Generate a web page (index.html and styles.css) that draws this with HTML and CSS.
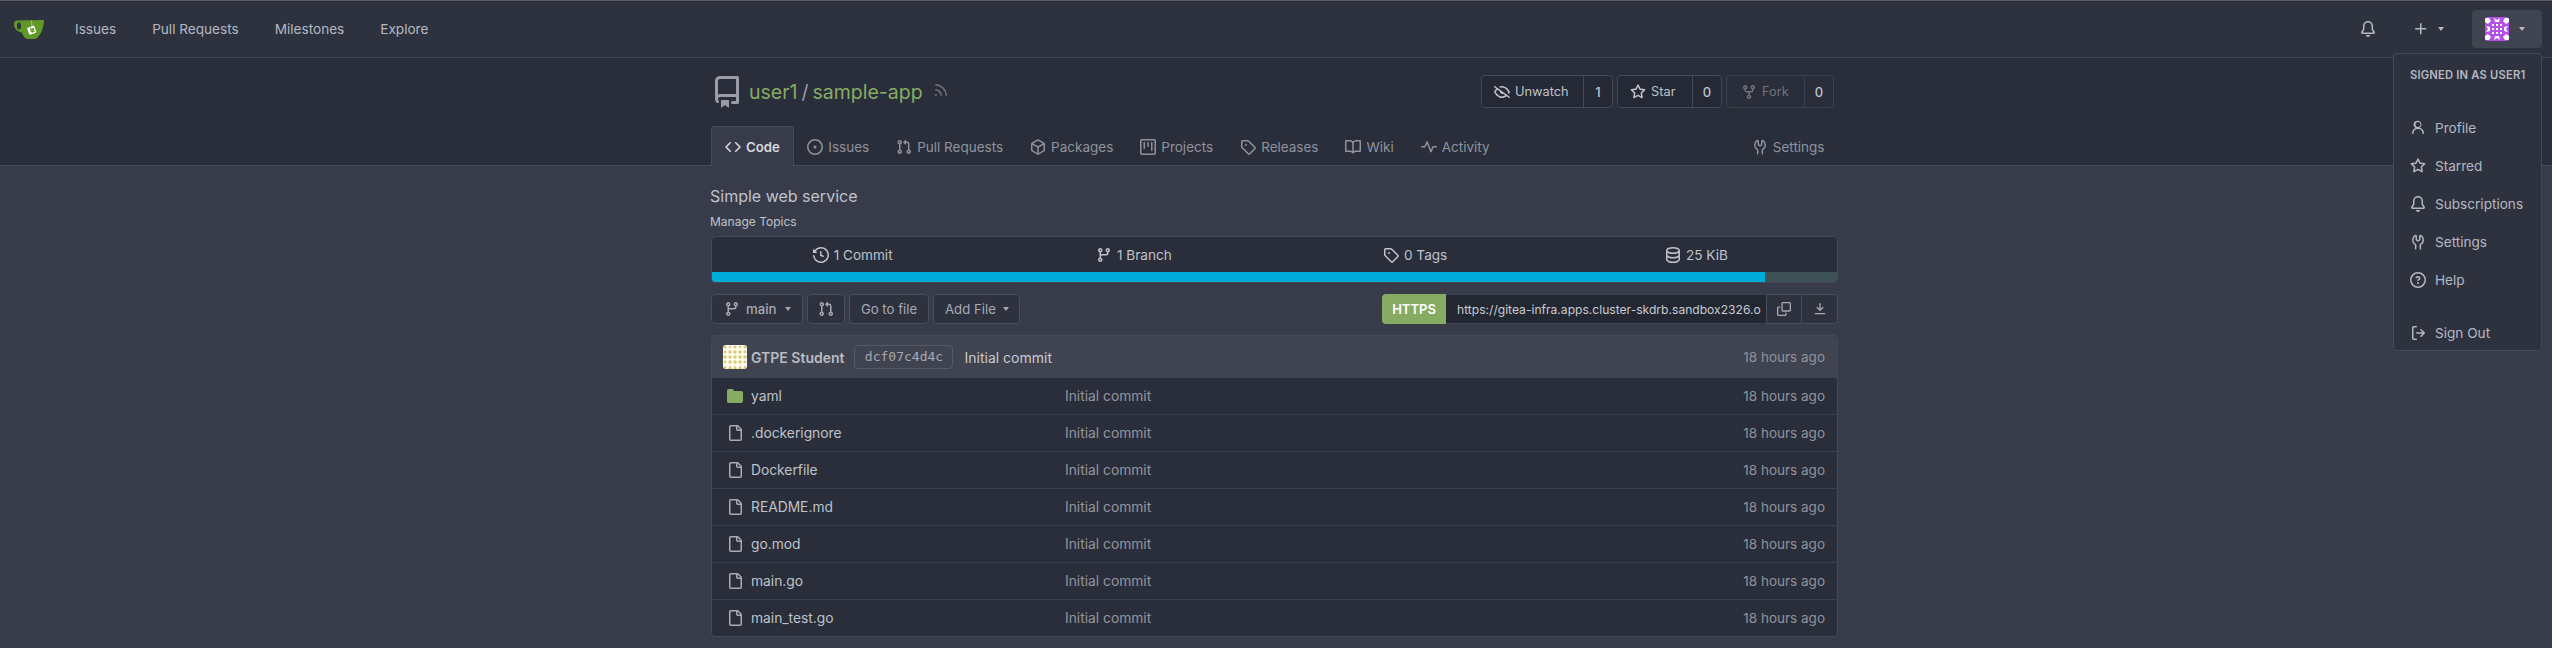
FILE: index.html
```html
<!DOCTYPE html>
<html lang="en">
<head>
  <meta charset="UTF-8" />
  <title>user1/sample-app</title>
  <link rel="stylesheet" href="styles.css">
</head>
<body>
  <svg class="icon-defs" aria-hidden="true">
    <symbol id="i-repo" viewBox="0 0 16 16"><path d="M2 2.5A2.5 2.5 0 0 1 4.5 0h8.75a.75.75 0 0 1 .75.75v12.5a.75.75 0 0 1-.75.75h-2.5a.75.75 0 0 1 0-1.5h1.75v-2h-8a1 1 0 0 0-.714 1.7.75.75 0 1 1-1.072 1.05A2.495 2.495 0 0 1 2 11.5Zm10.5-1h-8a1 1 0 0 0-1 1v6.708A2.486 2.486 0 0 1 4.5 9h8ZM5 12.25a.25.25 0 0 1 .25-.25h3.5a.25.25 0 0 1 .25.25v3.25a.25.25 0 0 1-.4.2l-1.45-1.087a.249.249 0 0 0-.3 0L5.4 15.7a.25.25 0 0 1-.4-.2Z"/></symbol>
    <symbol id="i-rss" viewBox="0 0 16 16"><path d="M2.002 2.725a.75.75 0 0 1 .797-.699C8.79 2.42 13.58 7.21 13.974 13.201a.75.75 0 0 1-1.497.098 10.502 10.502 0 0 0-9.776-9.776.747.747 0 0 1-.7-.798ZM2.84 7.05h-.002a7.002 7.002 0 0 1 6.113 6.111.75.75 0 0 1-1.49.178 5.503 5.503 0 0 0-4.8-4.8.75.75 0 0 1 .179-1.489ZM2 13a1 1 0 1 1 2 0 1 1 0 0 1-2 0Z"/></symbol>
    <symbol id="i-code" viewBox="0 0 16 16"><path d="m11.28 3.22 4.25 4.25a.75.75 0 0 1 0 1.06l-4.25 4.25a.749.749 0 0 1-1.275-.326.749.749 0 0 1 .215-.734L13.94 8l-3.72-3.72a.749.749 0 0 1 .326-1.275.749.749 0 0 1 .734.215Zm-6.56 0a.751.751 0 0 1 1.042.018.751.751 0 0 1 .018 1.042L2.06 8l3.72 3.72a.749.749 0 0 1-.326 1.275.749.749 0 0 1-.734-.215L.47 8.53a.75.75 0 0 1 0-1.06Z"/></symbol>
    <symbol id="i-issue" viewBox="0 0 16 16"><path d="M8 9.5a1.5 1.5 0 1 0 0-3 1.5 1.5 0 0 0 0 3Z"/><path d="M8 0a8 8 0 1 1 0 16A8 8 0 0 1 8 0ZM1.5 8a6.5 6.5 0 1 0 13 0 6.5 6.5 0 0 0-13 0Z"/></symbol>
    <symbol id="i-pull" viewBox="0 0 16 16"><path d="M1.5 3.25a2.25 2.25 0 1 1 3 2.122v5.256a2.251 2.251 0 1 1-1.5 0V5.372A2.25 2.25 0 0 1 1.5 3.25Zm5.677-.177L9.573.677A.25.25 0 0 1 10 .854V2.5h1A2.5 2.5 0 0 1 13.5 5v5.628a2.251 2.251 0 1 1-1.5 0V5a1 1 0 0 0-1-1h-1v1.646a.25.25 0 0 1-.427.177L7.177 3.427a.25.25 0 0 1 0-.354ZM3.75 2.5a.75.75 0 1 0 0 1.5.75.75 0 0 0 0-1.5Zm0 9.5a.75.75 0 1 0 0 1.5.75.75 0 0 0 0-1.5Zm8.25.75a.75.75 0 1 0 1.5 0 .75.75 0 0 0-1.5 0Z"/></symbol>
    <symbol id="i-package" viewBox="0 0 16 16"><path d="m8.878.392 5.25 3.045c.54.314.872.89.872 1.514v6.098a1.75 1.75 0 0 1-.872 1.514l-5.25 3.045a1.75 1.75 0 0 1-1.756 0l-5.25-3.045A1.75 1.75 0 0 1 1 11.049V4.951c0-.624.332-1.201.872-1.514L7.122.392a1.75 1.75 0 0 1 1.756 0ZM7.875 1.69l-4.63 2.685L8 7.133l4.755-2.758-4.63-2.685a.248.248 0 0 0-.25 0ZM2.5 5.677v5.372c0 .09.047.171.125.216l4.625 2.683V8.432Zm6.25 8.271 4.625-2.683a.25.25 0 0 0 .125-.216V5.677L8.75 8.432Z"/></symbol>
    <symbol id="i-project" viewBox="0 0 16 16"><path d="M1.75 0h12.5C15.216 0 16 .784 16 1.75v12.5A1.75 1.75 0 0 1 14.25 16H1.75A1.75 1.75 0 0 1 0 14.25V1.75C0 .784.784 0 1.75 0ZM1.5 1.75v12.5c0 .138.112.25.25.25h12.5a.25.25 0 0 0 .25-.25V1.75a.25.25 0 0 0-.25-.25H1.75a.25.25 0 0 0-.25.25ZM11.75 3a.75.75 0 0 1 .75.75v7.5a.75.75 0 0 1-1.5 0v-7.5a.75.75 0 0 1 .75-.75Zm-8.25.75a.75.75 0 0 1 1.5 0v5.5a.75.75 0 0 1-1.5 0ZM8 3a.75.75 0 0 1 .75.75v3.5a.75.75 0 0 1-1.5 0v-3.5A.75.75 0 0 1 8 3Z"/></symbol>
    <symbol id="i-tag" viewBox="0 0 16 16"><path d="M1 7.775V2.75C1 1.784 1.784 1 2.75 1h5.025c.464 0 .91.184 1.238.513l6.25 6.25a1.75 1.75 0 0 1 0 2.474l-5.026 5.026a1.75 1.75 0 0 1-2.474 0l-6.25-6.25A1.752 1.752 0 0 1 1 7.775Zm1.5 0c0 .066.026.13.073.177l6.25 6.25a.25.25 0 0 0 .354 0l5.025-5.025a.25.25 0 0 0 0-.354l-6.25-6.25a.25.25 0 0 0-.177-.073H2.75a.25.25 0 0 0-.25.25ZM6 5a1 1 0 1 1 0 2 1 1 0 0 1 0-2Z"/></symbol>
    <symbol id="i-book" viewBox="0 0 16 16"><path d="M0 1.75A.75.75 0 0 1 .75 1h4.253c1.227 0 2.317.59 3 1.501A3.743 3.743 0 0 1 11.006 1h4.245a.75.75 0 0 1 .75.75v10.5a.75.75 0 0 1-.75.75h-4.507a2.25 2.25 0 0 0-1.591.659l-.622.621a.75.75 0 0 1-1.06 0l-.622-.621A2.25 2.25 0 0 0 5.258 13H.75a.75.75 0 0 1-.75-.75Zm7.251 10.324.004-5.073-.002-2.253A2.25 2.25 0 0 0 5.003 2.5H1.5v9h3.757a3.75 3.75 0 0 1 1.994.574ZM8.755 4.75l-.004 7.322a3.752 3.752 0 0 1 1.992-.572H14.5v-9h-3.495a2.25 2.25 0 0 0-2.25 2.25Z"/></symbol>
    <symbol id="i-pulse" viewBox="0 0 16 16"><path d="M6 2c.306 0 .582.187.696.471L10 10.731l1.304-3.26A.751.751 0 0 1 12 7h3.25a.75.75 0 0 1 0 1.5h-2.742l-1.812 4.528a.751.751 0 0 1-1.392 0L6 4.77 4.696 8.03A.75.75 0 0 1 4 8.5H.75a.75.75 0 0 1 0-1.5h2.742l1.812-4.529A.751.751 0 0 1 6 2Z"/></symbol>
    <symbol id="i-tools" viewBox="0 0 16 16"><path d="M5.433 2.304A4.492 4.492 0 0 0 3.5 6c0 1.598.832 3.002 2.09 3.802.518.328.929.923.902 1.64v.008l-.164 3.337a.75.75 0 1 1-1.498-.073l.163-3.33c.002-.085-.05-.216-.207-.316A5.996 5.996 0 0 1 2 6a5.993 5.993 0 0 1 2.567-4.92 1.482 1.482 0 0 1 1.673-.04c.462.296.76.827.76 1.423v2.82c0 .082.041.16.11.206l.75.51a.25.25 0 0 0 .28 0l.75-.51A.249.249 0 0 0 9 5.282V2.463c0-.596.298-1.127.76-1.423a1.482 1.482 0 0 1 1.673.04A5.993 5.993 0 0 1 14 6a5.996 5.996 0 0 1-2.786 5.068c-.157.1-.209.23-.207.315l.163 3.33a.752.752 0 0 1-1.094.714.75.75 0 0 1-.404-.64l-.164-3.345c-.027-.717.384-1.312.902-1.64A4.495 4.495 0 0 0 12.5 6a4.492 4.492 0 0 0-1.933-3.696c-.024-.017-.067-.067-.067.159v2.82a1.75 1.75 0 0 1-.768 1.448l-.75.51a1.75 1.75 0 0 1-1.964 0l-.75-.51A1.75 1.75 0 0 1 5.5 5.283v-2.82c0-.226-.043-.176-.067-.159Z"/></symbol>
    <symbol id="i-eye-closed" viewBox="0 0 16 16"><path d="M.143 2.31a.75.75 0 0 1 1.047-.167l14.5 10.5a.75.75 0 1 1-.88 1.214l-2.248-1.628C11.346 13.19 9.792 14 8 14c-1.981 0-3.67-.992-4.933-2.078C1.797 10.832.88 9.577.43 8.9a1.619 1.619 0 0 1 0-1.797c.353-.533.995-1.42 1.868-2.305L.31 3.357A.75.75 0 0 1 .143 2.31Zm1.536 5.622A.12.12 0 0 0 1.657 8c0 .021.006.045.022.068.412.621 1.242 1.75 2.366 2.717C5.175 11.758 6.527 12.5 8 12.5c1.195 0 2.31-.488 3.29-1.191L9.063 9.695A2 2 0 0 1 6.058 7.52L3.529 5.688a14.207 14.207 0 0 0-1.85 2.244ZM8 3.5c-.516 0-1.017.09-1.499.251a.75.75 0 1 1-.473-1.423A6.207 6.207 0 0 1 8 2c1.981 0 3.67.992 4.933 2.078 1.27 1.091 2.187 2.345 2.637 3.023a1.62 1.62 0 0 1 0 1.798c-.11.166-.248.365-.41.587a.75.75 0 1 1-1.21-.887c.148-.201.272-.382.371-.53a.119.119 0 0 0 0-.137c-.412-.621-1.242-1.75-2.366-2.717C10.825 4.242 9.473 3.5 8 3.5Z"/></symbol>
    <symbol id="i-star" viewBox="0 0 16 16"><path d="M8 .25a.75.75 0 0 1 .673.418l1.882 3.815 4.21.612a.75.75 0 0 1 .416 1.279l-3.046 2.97.719 4.192a.751.751 0 0 1-1.088.791L8 12.347l-3.766 1.98a.75.75 0 0 1-1.088-.79l.72-4.194L.818 6.374a.75.75 0 0 1 .416-1.28l4.21-.611L7.327.668A.75.75 0 0 1 8 .25Zm0 2.445L6.615 5.5a.75.75 0 0 1-.564.41l-3.097.45 2.24 2.184a.75.75 0 0 1 .216.664l-.528 3.084 2.769-1.456a.75.75 0 0 1 .698 0l2.77 1.456-.53-3.084a.75.75 0 0 1 .216-.664l2.24-2.183-3.096-.45a.75.75 0 0 1-.564-.41L8 2.694Z"/></symbol>
    <symbol id="i-fork" viewBox="0 0 16 16"><path d="M5 5.372v.878c0 .414.336.75.75.75h4.5a.75.75 0 0 0 .75-.75v-.878a2.25 2.25 0 1 1 1.5 0v.878a2.25 2.25 0 0 1-2.25 2.25h-1.5v2.128a2.251 2.251 0 1 1-1.5 0V8.5h-1.5A2.25 2.25 0 0 1 3.5 6.25v-.878a2.25 2.25 0 1 1 1.5 0ZM5 3.25a.75.75 0 1 0-1.5 0 .75.75 0 0 0 1.5 0Zm6.75.75a.75.75 0 1 0 0-1.5.75.75 0 0 0 0 1.5Zm-3 8.75a.75.75 0 1 0-1.5 0 .75.75 0 0 0 1.5 0Z"/></symbol>
    <symbol id="i-history" viewBox="0 0 16 16"><path d="m.427 1.927 1.215 1.215a8.002 8.002 0 1 1-1.6 5.685.75.75 0 1 1 1.493-.154 6.5 6.5 0 1 0 1.18-4.458l1.358 1.358A.25.25 0 0 1 3.896 6H.25A.25.25 0 0 1 0 5.75V2.104a.25.25 0 0 1 .427-.177ZM7.75 4a.75.75 0 0 1 .75.75v2.992l2.028.812a.75.75 0 0 1-.557 1.392l-2.5-1A.751.751 0 0 1 7 8.25v-3.5A.75.75 0 0 1 7.75 4Z"/></symbol>
    <symbol id="i-branch" viewBox="0 0 16 16"><path d="M9.5 3.25a2.25 2.25 0 1 1 3 2.122V6A2.5 2.5 0 0 1 10 8.5H6a1 1 0 0 0-1 1v1.128a2.251 2.251 0 1 1-1.5 0V5.372a2.25 2.25 0 1 1 1.5 0v1.836A2.493 2.493 0 0 1 6 7h4a1 1 0 0 0 1-1v-.628A2.25 2.25 0 0 1 9.5 3.25Zm-6 0a.75.75 0 1 0 1.5 0 .75.75 0 0 0-1.5 0Zm8.25-.75a.75.75 0 1 0 0 1.5.75.75 0 0 0 0-1.5ZM4.25 12a.75.75 0 1 0 0 1.5.75.75 0 0 0 0-1.5Z"/></symbol>
    <symbol id="i-database" viewBox="0 0 16 16"><path d="M1 3.5c0-.626.292-1.165.7-1.59.406-.422.956-.767 1.579-1.041C4.525.32 6.195 0 8 0c1.805 0 3.475.32 4.722.869.622.274 1.172.62 1.578 1.04.408.426.7.965.7 1.591v9c0 .626-.292 1.165-.7 1.59-.406.422-.956.767-1.579 1.041C11.476 15.68 9.806 16 8 16c-1.805 0-3.475-.32-4.721-.869-.623-.274-1.173-.62-1.579-1.04-.408-.426-.7-.965-.7-1.591Zm1.5 0c0 .133.058.318.282.551.227.237.591.483 1.101.707C4.898 5.205 6.353 5.5 8 5.5c1.646 0 3.101-.295 4.118-.742.508-.224.873-.471 1.1-.708.224-.232.282-.417.282-.55 0-.133-.058-.318-.282-.551-.227-.237-.591-.483-1.101-.707C11.102 1.795 9.647 1.5 8 1.5c-1.646 0-3.101.295-4.118.742-.508.224-.873.471-1.1.708-.224.232-.282.417-.282.55Zm0 4.5c0 .133.058.318.282.551.227.237.591.483 1.101.707C4.898 9.705 6.353 10 8 10c1.646 0 3.101-.295 4.118-.742.508-.224.873-.471 1.1-.708.224-.232.282-.417.282-.55V5.724c-.241.15-.503.286-.778.407C11.475 6.68 9.805 7 8 7c-1.805 0-3.475-.32-4.721-.869a6.15 6.15 0 0 1-.779-.407Zm0 2.225V12.5c0 .133.058.318.282.55.227.237.592.484 1.1.708 1.016.447 2.471.742 4.118.742 1.647 0 3.102-.295 4.117-.742.51-.224.874-.47 1.101-.707.224-.233.282-.418.282-.551v-2.275c-.241.15-.503.285-.778.406-1.247.549-2.917.869-4.722.869-1.805 0-3.475-.32-4.721-.869a6.327 6.327 0 0 1-.779-.406Z"/></symbol>
    <symbol id="i-copy" viewBox="0 0 16 16"><path d="M0 6.75C0 5.784.784 5 1.75 5h1.5a.75.75 0 0 1 0 1.5h-1.5a.25.25 0 0 0-.25.25v7.5c0 .138.112.25.25.25h7.5a.25.25 0 0 0 .25-.25v-1.5a.75.75 0 0 1 1.5 0v1.5A1.75 1.75 0 0 1 9.25 16h-7.5A1.75 1.75 0 0 1 0 14.25Z"/><path d="M5 1.75C5 .784 5.784 0 6.75 0h7.5C15.216 0 16 .784 16 1.75v7.5A1.75 1.75 0 0 1 14.25 11h-7.5A1.75 1.75 0 0 1 5 9.25Zm1.75-.25a.25.25 0 0 0-.25.25v7.5c0 .138.112.25.25.25h7.5a.25.25 0 0 0 .25-.25v-7.5a.25.25 0 0 0-.25-.25Z"/></symbol>
    <symbol id="i-download" viewBox="0 0 16 16"><path d="M2 13.25a.75.75 0 0 1 .75-.75h10.5a.75.75 0 0 1 0 1.5H2.75a.75.75 0 0 1-.75-.75Z"/><path d="M7.25 7.689V2a.75.75 0 0 1 1.5 0v5.689l1.97-1.969a.749.749 0 1 1 1.06 1.06l-3.25 3.25a.749.749 0 0 1-1.06 0L4.22 6.78a.749.749 0 1 1 1.06-1.06l1.97 1.969Z"/></symbol>
    <symbol id="i-file" viewBox="0 0 16 16"><path d="M2 1.75C2 .784 2.784 0 3.75 0h6.586c.464 0 .909.184 1.237.513l2.914 2.914c.329.328.513.773.513 1.237v9.586A1.75 1.75 0 0 1 13.25 16h-9.5A1.75 1.75 0 0 1 2 14.25Zm1.75-.25a.25.25 0 0 0-.25.25v12.5c0 .138.112.25.25.25h9.5a.25.25 0 0 0 .25-.25V6h-2.75A1.75 1.75 0 0 1 9 4.25V1.5Zm6.75.062V4.25c0 .138.112.25.25.25h2.688l-.011-.013-2.914-2.914-.013-.011Z"/></symbol>
    <symbol id="i-folder" viewBox="0 0 16 16"><path d="M1.75 1A1.75 1.75 0 0 0 0 2.75v10.5C0 14.216.784 15 1.75 15h12.5A1.75 1.75 0 0 0 16 13.25v-8.5A1.75 1.75 0 0 0 14.25 3H7.5a.25.25 0 0 1-.2-.1l-.9-1.2C6.07 1.26 5.55 1 5 1H1.75Z"/></symbol>
    <symbol id="i-bell" viewBox="0 0 16 16"><path d="M8 16a2 2 0 0 0 1.985-1.75c.017-.137-.097-.25-.235-.25h-3.5c-.138 0-.252.113-.235.25A2 2 0 0 0 8 16ZM3 5a5 5 0 0 1 10 0v2.947c0 .05.015.098.042.139l1.703 2.555A1.519 1.519 0 0 1 13.482 13H2.518a1.516 1.516 0 0 1-1.263-2.36l1.703-2.554A.255.255 0 0 0 3 7.947Zm5-3.5A3.5 3.5 0 0 0 4.5 5v2.947c0 .346-.102.683-.294.97l-1.703 2.556a.017.017 0 0 0-.003.01l.001.006c0 .002.002.004.004.006l.006.004.007.001h10.964l.007-.001.006-.004.004-.006.001-.007a.017.017 0 0 0-.003-.01l-1.703-2.554a1.745 1.745 0 0 1-.294-.97V5A3.5 3.5 0 0 0 8 1.5Z"/></symbol>
    <symbol id="i-plus" viewBox="0 0 16 16"><path d="M7.75 2a.75.75 0 0 1 .75.75V7h4.25a.75.75 0 0 1 0 1.5H8.5v4.25a.75.75 0 0 1-1.5 0V8.5H2.75a.75.75 0 0 1 0-1.5H7V2.75A.75.75 0 0 1 7.75 2Z"/></symbol>
    <symbol id="i-person" viewBox="0 0 16 16"><path d="M10.561 8.073a6.005 6.005 0 0 1 3.432 5.142.75.75 0 1 1-1.498.07 4.5 4.5 0 0 0-8.99 0 .75.75 0 0 1-1.498-.07 6.004 6.004 0 0 1 3.431-5.142 3.999 3.999 0 1 1 4.123 0ZM10.5 4.5a2.5 2.5 0 1 0-5 0 2.5 2.5 0 0 0 5 0Z"/></symbol>
    <symbol id="i-question" viewBox="0 0 16 16"><path d="M0 8a8 8 0 1 1 16 0A8 8 0 0 1 0 8Zm8-6.5a6.5 6.5 0 1 0 0 13 6.5 6.5 0 0 0 0-13ZM6.92 6.085h.001a.749.749 0 1 1-1.342-.67c.169-.339.436-.701.849-.977C6.845 4.16 7.369 4 8 4a2.756 2.756 0 0 1 1.637.525c.503.377.863.965.863 1.725 0 .448-.115.83-.329 1.15-.205.307-.47.513-.692.662-.109.072-.22.138-.313.195l-.006.004a6.24 6.24 0 0 0-.26.16.952.952 0 0 0-.276.245.75.75 0 0 1-1.248-.832c.184-.264.42-.489.692-.661.103-.067.207-.132.313-.195l.007-.004c.1-.061.182-.11.258-.161a.969.969 0 0 0 .277-.245C8.96 6.514 9 6.427 9 6.25a.612.612 0 0 0-.262-.525A1.27 1.27 0 0 0 8 5.5c-.369 0-.595.09-.74.187a1.01 1.01 0 0 0-.34.398ZM9 11a1 1 0 1 1-2 0 1 1 0 0 1 2 0Z"/></symbol>
    <symbol id="i-signout" viewBox="0 0 16 16"><path d="M2 2.75C2 1.784 2.784 1 3.75 1h2.5a.75.75 0 0 1 0 1.5h-2.5a.25.25 0 0 0-.25.25v10.5c0 .138.112.25.25.25h2.5a.75.75 0 0 1 0 1.5h-2.5A1.75 1.75 0 0 1 2 13.25Zm10.44 4.5-1.97-1.97a.749.749 0 0 1 .326-1.275.749.749 0 0 1 .734.215l3.25 3.25a.75.75 0 0 1 0 1.06l-3.25 3.25a.749.749 0 0 1-1.275-.326.749.749 0 0 1 .215-.734l1.97-1.97H6.75a.75.75 0 0 1 0-1.5Z"/></symbol>
  </svg>

  <nav class="navbar">
    <a class="logo">
      <svg width="30" height="20" viewBox="0 0 30 20">
        <path fill="#609926" d="M3 1.5 30 1C30 6 28 14 24 18 23 19.5 21 20 19 20H14C11 20 9 17 8 13.5 4 13 0 10 0 5 0 3 1 1.5 3 1.5Z"/>
        <ellipse cx="5" cy="7" rx="2" ry="3.6" fill="#2e323e"/>
        <path stroke="#c9d6b5" stroke-width=".7" d="M17.5 1.5 18 7"/>
        <rect x="14" y="7.5" width="7.5" height="7.5" rx="1" fill="#fff" transform="rotate(-20 17.7 11.2)"/>
        <path fill="none" stroke="#609926" stroke-width="1.1" d="M16.4 8.8 17.4 13.2M19.3 9.6 18 10.2 18.6 13 20 12.4Z"/>
      </svg>
    </a>
    <a class="nav-link">Issues</a>
    <a class="nav-link">Pull Requests</a>
    <a class="nav-link">Milestones</a>
    <a class="nav-link">Explore</a>
    <div class="nav-right">
      <a class="nav-bell"><svg class="icon"><use href="#i-bell"/></svg></a>
      <a class="nav-plus"><svg class="icon"><use href="#i-plus"/></svg><span class="caret"></span></a>
      <div class="user-wrap">
        <a class="user-btn">
          <svg class="avatar" viewBox="0 0 24 24">
            <rect width="24" height="24" fill="#b44fe8"/>
            <g fill="#fff">
              <path d="M0 1h4l2 3-3 3-3-2ZM24 1h-4l-2 3 3 3 3-2ZM0 23h4l2-3-3-3-3 2ZM24 23h-4l-2-3 3-3 3 2Z"/>
              <path d="M9 1 12 3 15 1 14 5H10ZM9 23 12 21 15 23 14 19H10ZM1 9 3 12 1 15 5 14V10ZM23 9 21 12 23 15 19 14V10Z"/>
              <rect x="7" y="7" width="2" height="2"/><rect x="11" y="7" width="2" height="2"/><rect x="15" y="7" width="2" height="2"/>
              <rect x="7" y="11" width="2" height="2"/><rect x="11" y="11" width="2" height="2"/><rect x="15" y="11" width="2" height="2"/>
              <rect x="7" y="15" width="2" height="2"/><rect x="11" y="15" width="2" height="2"/><rect x="15" y="15" width="2" height="2"/>
            </g>
          </svg>
          <span class="caret"></span>
        </a>
        <div class="user-menu">
          <div class="menu-header">Signed in as user1</div>
          <a class="menu-item"><svg class="icon"><use href="#i-person"/></svg>Profile</a>
          <a class="menu-item"><svg class="icon"><use href="#i-star"/></svg>Starred</a>
          <a class="menu-item"><svg class="icon"><use href="#i-bell"/></svg>Subscriptions</a>
          <a class="menu-item"><svg class="icon"><use href="#i-tools"/></svg>Settings</a>
          <a class="menu-item"><svg class="icon"><use href="#i-question"/></svg>Help</a>
          <a class="menu-item menu-signout"><svg class="icon"><use href="#i-signout"/></svg>Sign Out</a>
        </div>
      </div>
    </div>
  </nav>

  <header class="repo-header">
    <div class="repo-title-row">
      <div class="repo-title">
        <svg class="repo-icon"><use href="#i-repo"/></svg>
        <a class="repo-link">user1</a><span class="repo-slash">/</span><a class="repo-link">sample-app</a>
        <svg class="rss-icon"><use href="#i-rss"/></svg>
      </div>
      <div class="repo-buttons">
        <div class="count-btn"><a class="count-label label-watch"><svg class="icon"><use href="#i-eye-closed"/></svg>Unwatch</a><a class="count-num">1</a></div>
        <div class="count-btn"><a class="count-label label-star"><svg class="icon"><use href="#i-star"/></svg>Star</a><a class="count-num">0</a></div>
        <div class="count-btn is-disabled"><a class="count-label label-fork"><svg class="icon"><use href="#i-fork"/></svg>Fork</a><a class="count-num">0</a></div>
      </div>
    </div>
    <div class="repo-tabs">
      <a class="tab is-active"><svg class="icon"><use href="#i-code"/></svg>Code</a>
      <a class="tab"><svg class="icon"><use href="#i-issue"/></svg>Issues</a>
      <a class="tab"><svg class="icon"><use href="#i-pull"/></svg>Pull Requests</a>
      <a class="tab"><svg class="icon"><use href="#i-package"/></svg>Packages</a>
      <a class="tab"><svg class="icon"><use href="#i-project"/></svg>Projects</a>
      <a class="tab"><svg class="icon"><use href="#i-tag"/></svg>Releases</a>
      <a class="tab"><svg class="icon"><use href="#i-book"/></svg>Wiki</a>
      <a class="tab"><svg class="icon"><use href="#i-pulse"/></svg>Activity</a>
      <a class="tab tab-right"><svg class="icon"><use href="#i-tools"/></svg>Settings</a>
    </div>
  </header>

  <main class="container">
    <p class="repo-desc">Simple web service</p>
    <p class="repo-topics">Manage Topics</p>

    <div class="stats">
      <div class="stats-row">
        <a class="stat"><svg class="icon"><use href="#i-history"/></svg>1 Commit</a>
        <a class="stat"><svg class="icon"><use href="#i-branch"/></svg>1 Branch</a>
        <a class="stat"><svg class="icon"><use href="#i-tag"/></svg>0 Tags</a>
        <a class="stat"><svg class="icon"><use href="#i-database"/></svg>25 KiB</a>
      </div>
      <div class="lang-bar"><span class="lang-go" style="width:93.6%"></span></div>
    </div>

    <div class="toolbar">
      <a class="btn btn-main"><svg class="icon"><use href="#i-branch"/></svg>main<span class="caret"></span></a>
      <a class="btn btn-pull"><svg class="icon"><use href="#i-pull"/></svg></a>
      <a class="btn btn-goto">Go to file</a>
      <a class="btn btn-add">Add File<span class="caret"></span></a>
      <div class="clone">
        <a class="clone-proto">HTTPS</a>
        <span class="clone-url">https://gitea-infra.apps.cluster-skdrb.sandbox2326.o</span>
        <a class="clone-btn"><svg class="icon icon-14"><use href="#i-copy"/></svg></a>
        <a class="clone-btn clone-last"><svg class="icon icon-14"><use href="#i-download"/></svg></a>
      </div>
    </div>

    <table class="files">
      <colgroup>
        <col class="w-name">
        <col>
        <col class="w-time">
      </colgroup>
      <thead>
        <tr>
          <th colspan="3">
            <div class="commit-head">
              <svg class="avatar" viewBox="0 0 24 24">
                <rect width="24" height="24" fill="#fffdf2"/>
                <g fill="#dcca78">
                  <circle cx="2" cy="2" r="1.6"/><circle cx="7" cy="2" r="1.2"/><circle cx="12" cy="2" r="1.6"/><circle cx="17" cy="2" r="1.2"/><circle cx="22" cy="2" r="1.6"/>
                  <circle cx="2" cy="7" r="1.4"/><circle cx="7" cy="7" r="1.8"/><circle cx="12" cy="7" r="1.8"/><circle cx="17" cy="7" r="1.8"/><circle cx="22" cy="7" r="1.4"/>
                  <circle cx="2" cy="12" r="1.8"/><circle cx="7" cy="12" r="1.8"/><circle cx="12" cy="12" r="1.8"/><circle cx="17" cy="12" r="1.8"/><circle cx="22" cy="12" r="1.8"/>
                  <circle cx="2" cy="17" r="1.4"/><circle cx="7" cy="17" r="1.8"/><circle cx="12" cy="17" r="1.8"/><circle cx="17" cy="17" r="1.8"/><circle cx="22" cy="17" r="1.4"/>
                  <path d="M0 24 2 20 4 24ZM5 24 7 20 9 24ZM10 24 12 20 14 24ZM15 24 17 20 19 24ZM20 24 22 20 24 24Z"/>
                </g>
              </svg>
              <span class="commit-author">GTPE Student</span>
              <a class="commit-sha">dcf07c4d4c</a>
              <span class="commit-title">Initial commit</span>
              <span class="commit-time">18 hours ago</span>
            </div>
          </th>
        </tr>
      </thead>
      <tbody>
        <tr><td class="col-name"><svg class="icon folder"><use href="#i-folder"/></svg>yaml</td><td class="col-msg">Initial commit</td><td class="col-time">18 hours ago</td></tr>
        <tr><td class="col-name"><svg class="icon"><use href="#i-file"/></svg>.dockerignore</td><td class="col-msg">Initial commit</td><td class="col-time">18 hours ago</td></tr>
        <tr><td class="col-name"><svg class="icon"><use href="#i-file"/></svg>Dockerfile</td><td class="col-msg">Initial commit</td><td class="col-time">18 hours ago</td></tr>
        <tr><td class="col-name"><svg class="icon"><use href="#i-file"/></svg>README.md</td><td class="col-msg">Initial commit</td><td class="col-time">18 hours ago</td></tr>
        <tr><td class="col-name"><svg class="icon"><use href="#i-file"/></svg>go.mod</td><td class="col-msg">Initial commit</td><td class="col-time">18 hours ago</td></tr>
        <tr><td class="col-name"><svg class="icon"><use href="#i-file"/></svg>main.go</td><td class="col-msg">Initial commit</td><td class="col-time">18 hours ago</td></tr>
        <tr><td class="col-name"><svg class="icon"><use href="#i-file"/></svg>main_test.go</td><td class="col-msg">Initial commit</td><td class="col-time">18 hours ago</td></tr>
      </tbody>
    </table>
  </main>
</body>
</html>
```

FILE: styles.css
```css
* { box-sizing: border-box; margin: 0; padding: 0; }
body {
  font-family: Inter, 'Noto Sans', 'Liberation Sans', sans-serif;
  font-size: 13.6px;
  background: #383c4a;
  color: #bfc2cb;
}
.icon-defs { display: none; }
.icon { width: 16px; height: 16px; fill: currentColor; flex: none; }
.icon-14 { width: 14px; height: 14px; }
.avatar { width: 24px; height: 24px; border-radius: 3px; flex: none; }
.caret {
  display: inline-block; width: 0; height: 0;
  border-left: 3.5px solid transparent;
  border-right: 3.5px solid transparent;
  border-top: 4px solid currentColor;
}

/* top bar */
.navbar {
  display: flex; align-items: center;
  height: 58px; padding-left: 14px;
  background: #2e323e;
  border-top: 1px solid #5a5d66;
  border-bottom: 1px solid #444854;
  color: #b4b8c3;
}
.logo { display: flex; width: 61px; }
.nav-link { margin-right: 36px; }
.nav-right { display: flex; align-items: center; margin-left: auto; padding-right: 10px; }
.nav-bell { display: flex; margin-right: 37px; }
.nav-plus { display: flex; align-items: center; gap: 9px; margin-right: 28px; }
.user-wrap { position: relative; }
.user-btn {
  display: flex; align-items: center; gap: 10px;
  width: 70px; height: 38px; padding-left: 13px;
  background: #404450; border-radius: 4px;
}
.user-menu {
  position: absolute; top: 43px; right: 0; z-index: 5;
  width: 149px; height: 298px;
  background: #2e323e;
  border: 1px solid #454955; border-radius: 4px;
}
.menu-header {
  padding: 14px 0 0 16px; height: 55px;
  font-size: 11.2px; font-weight: 600; letter-spacing: .2px;
  text-transform: uppercase; white-space: nowrap;
}
.menu-item {
  display: flex; align-items: center; gap: 9px;
  height: 38px; padding-left: 16px;
}
.menu-signout { margin-top: 15px; }

/* repo header */
.repo-header {
  background: #2a2e3a;
  border-bottom: 1px solid #484c58;
  height: 108px;
  padding: 17px 0 0 711px;
}
.repo-title-row {
  display: flex; align-items: center; justify-content: space-between;
  width: 1123px; height: 33px;
}
.repo-title { display: flex; align-items: center; font-size: 19.5px; color: #9a9da8; }
.repo-icon { width: 32px; height: 32px; fill: currentColor; margin-right: 6px; }
.repo-link { color: #87ab63; }
.repo-slash { margin: 0 4px; }
.rss-icon { width: 16px; height: 16px; fill: #6f727d; margin: -4px 0 0 10px; }
.repo-buttons { display: flex; gap: 4px; }
.count-btn {
  display: flex; height: 33px;
  background: #252935;
  border: 1px solid #454955; border-radius: 4px;
}
.count-label {
  display: flex; align-items: center; gap: 5px;
  padding-left: 12px; font-size: 12.8px;
  border-right: 1px solid #454955;
}
.label-watch { width: 102px; }
.label-star { width: 75px; }
.label-fork { width: 78px; padding-left: 14px; }
.count-num { display: flex; align-items: center; justify-content: center; width: 28px; font-weight: 500; font-size: 13px; }
.is-disabled { background: #2a2e3a; border-color: #3c404c; }
.is-disabled .count-label { color: #6f727d; border-color: #3c404c; }

.repo-tabs { display: flex; width: 1127px; margin-top: 18px; }
.tab {
  display: flex; align-items: center; gap: 5px;
  height: 40px; padding: 0 12.5px;
  color: #8f929d; font-size: 13.5px;
  border: 1px solid transparent; border-bottom: 0;
}
.tab.is-active {
  background: #383c4a; color: #d8dae0; font-weight: 600; font-size: 13.2px;
  padding: 0 13px;
  border-color: #484c58; border-radius: 4px 4px 0 0;
}
.tab-right { margin-left: auto; }

/* main column */
.container { width: 1127px; margin-left: 711px; }
.repo-desc { font-size: 16px; line-height: 20px; margin-top: 20px; margin-left: -1px; }
.repo-topics { font-size: 12px; line-height: 16px; margin-top: 8px; margin-left: -1px; }

.stats {
  margin-top: 6px;
  background: #2a2e3a;
  border: 1px solid #454955; border-radius: 4px;
  overflow: hidden;
}
.stats-row { display: grid; grid-template-columns: repeat(4, 1fr); height: 35px; }
.stat { display: flex; align-items: center; justify-content: center; gap: 5px; }
.lang-bar { height: 10px; background: #3d5056; }
.lang-go { display: block; height: 100%; background: #00add8; }

.toolbar { display: flex; align-items: center; gap: 4px; margin-top: 11px; }
.btn {
  display: flex; align-items: center; height: 30px;
  background: #2e323e; color: #a6a9b3;
  border: 1px solid #4a4e5a; border-radius: 4px;
  font-size: 13.2px;
}
.btn-main { width: 92px; padding-left: 12px; gap: 6px; font-weight: 500; }
.btn-main .caret { margin-left: 3px; }
.btn-pull { width: 38px; justify-content: center; }
.btn-goto { width: 80px; justify-content: center; }
.btn-add { width: 87px; padding-left: 11px; gap: 7px; }
.clone { display: flex; margin-left: auto; height: 30px; }
.clone-proto {
  display: flex; align-items: center; justify-content: center;
  width: 64px; background: #87ab63; color: #fff;
  font-size: 13px; font-weight: 600; border-radius: 4px 0 0 4px;
}
.clone-url {
  display: flex; align-items: center;
  width: 320px; padding-left: 11px;
  background: #232731; color: #c8cbd3;
  border: 1px solid #3f4350; border-width: 1px 0;
  font-size: 12.1px; white-space: nowrap;
}
.clone-btn {
  display: flex; align-items: center; justify-content: center;
  width: 35px; background: #2e323e; color: #a6a9b3;
  border: 1px solid #4a4e5a; border-right: 0;
}
.clone-last { width: 37px; border-right: 1px solid #4a4e5a; border-radius: 0 4px 4px 0; }

.files {
  width: 100%; margin-top: 11px;
  border-collapse: separate; border-spacing: 0;
  border: 1px solid #454955; border-radius: 4px;
  background: #2a2e3a;
  table-layout: fixed;
}
.w-name { width: 353px; }
.w-time { width: 200px; }
.files th { background: #404450; height: 42px; font-size: 14px; font-weight: 400; text-align: left; border-radius: 4px 4px 0 0; }
.commit-head { display: flex; align-items: center; padding: 0 12px 0 11px; }
.commit-author { margin-left: 4px; font-weight: 600; color: #b9bcc6; }
.commit-sha {
  margin-left: 10px; width: 99px; height: 24px; line-height: 22px; text-align: center;
  border: 1px solid #565a66; border-radius: 4px;
  font-family: 'DejaVu Sans Mono', 'Liberation Mono', monospace; font-size: 13px; color: #a6a9b3;
}
.commit-title { margin-left: 11px; color: #c8cad2; }
.commit-time { margin-left: auto; font-size: 13.5px; color: #8f929d; }
.files td { height: 37px; border-top: 1px solid #3b3f4b; white-space: nowrap; font-size: 13.8px; }
.files tbody tr:first-child td { height: 36px; border-top: 0; }
.col-name { padding-left: 15px; }
.col-name .icon { margin-right: 8px; vertical-align: -3px; color: #a9acb6; }
.col-name .folder { color: #87ab63; }
.col-msg { color: #92959f; }
.files .col-time { padding-right: 12px; text-align: right; font-size: 13.5px; color: #8f929d; }
```
